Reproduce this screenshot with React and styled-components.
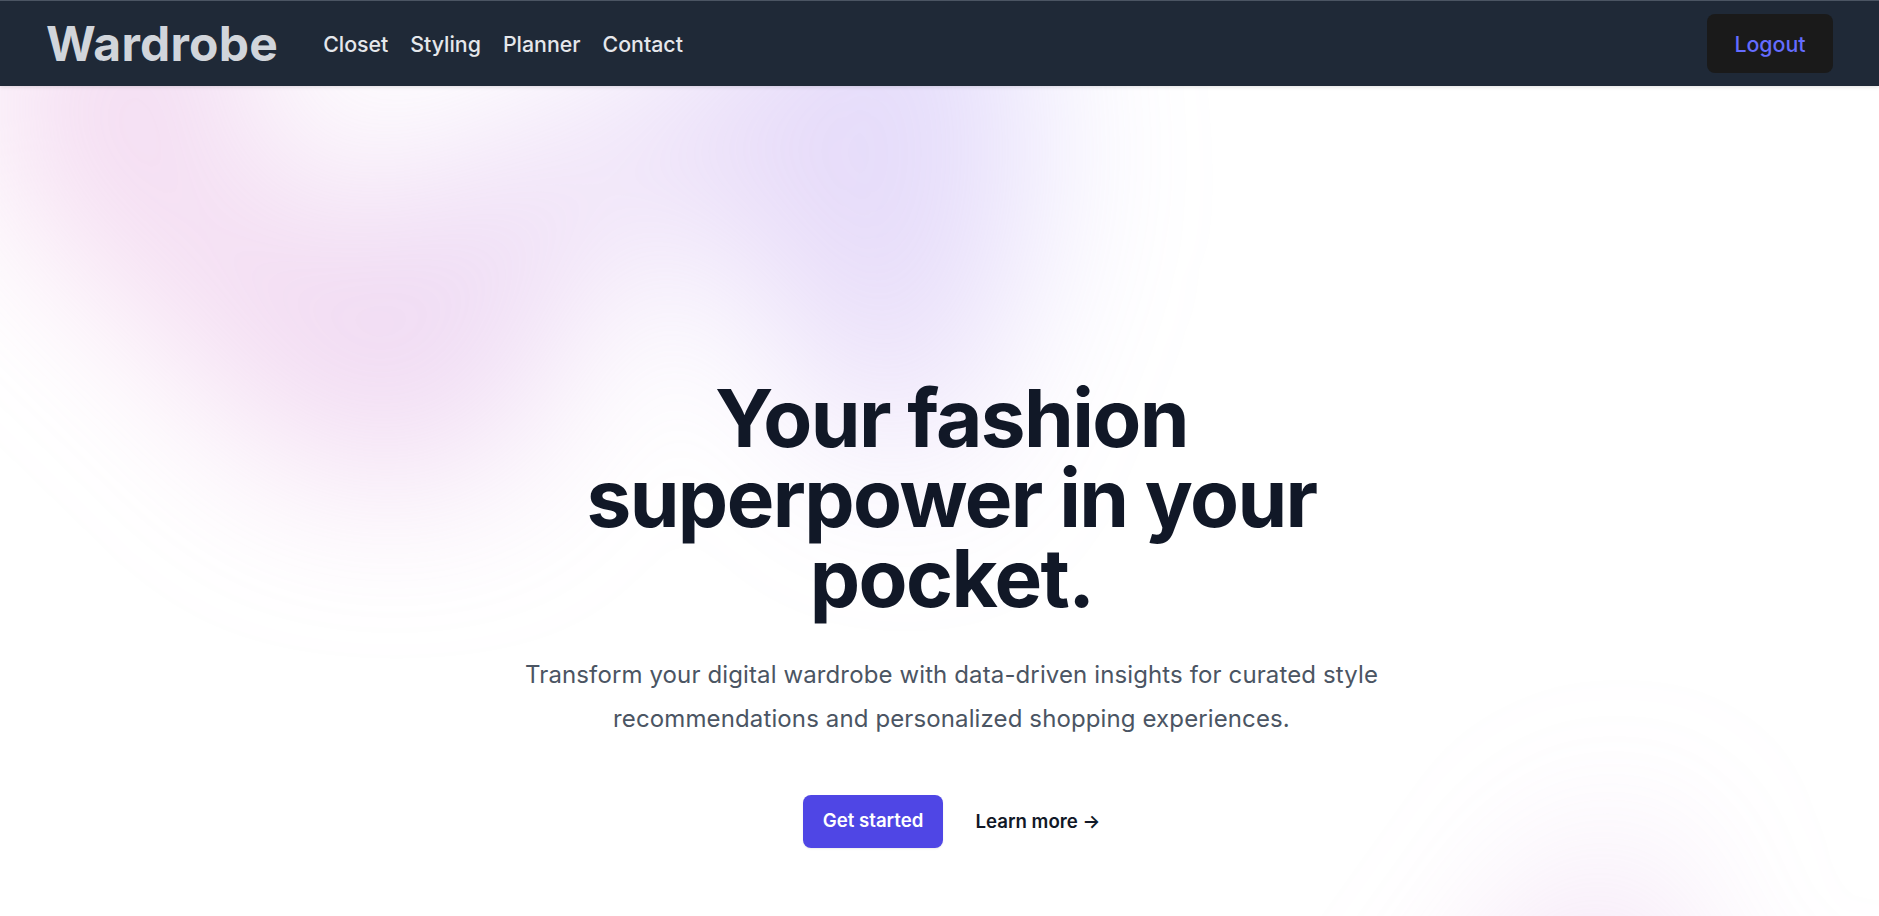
import React from "react";
import styled, { createGlobalStyle } from "styled-components";

const GlobalStyle = createGlobalStyle`
  html, body {
    margin: 0;
    padding: 0;
    background: #ffffff;
    font-family: Inter, "Noto Sans", sans-serif;
    -webkit-font-smoothing: antialiased;
  }
  * { box-sizing: border-box; }
`;

const BLOB_SHAPE =
  "polygon(74.1% 44.1%, 100% 61.6%, 97.5% 26.9%, 85.5% 0.1%, 80.7% 2%, 72.5% 32.5%, 60.2% 62.4%, 52.4% 68.1%, 47.5% 58.3%, 45.2% 34.5%, 27.5% 76.7%, 0.1% 64.9%, 17.9% 100%, 27.6% 76.8%, 76.1% 97.7%, 74.1% 44.1%)";

export const Page = styled.div`
  position: relative;
  isolation: isolate;
  overflow: hidden;
  height: 100vh;
  background: #ffffff;
`;

// blurred colour wash behind the hero
export const BlobLayer = styled.div`
  position: absolute;
  left: 0;
  right: 0;
  top: ${(p) => p.$top};
  z-index: -1;
  overflow: hidden;
  filter: blur(85px);
  pointer-events: none;
`;

export const Blob = styled.div`
  position: relative;
  left: ${(p) => p.$left};
  width: 1540px;
  aspect-ratio: 1155 / 678;
  transform: translateX(-50%) rotate(${(p) => p.$rotate || 0}deg);
  background: linear-gradient(to top right, #ff80b5, #9089fc);
  opacity: 0.3;
  clip-path: ${BLOB_SHAPE};
`;

export const NavBar = styled.header`
  display: flex;
  align-items: center;
  height: 86px;
  padding: 0 46px 0 46px;
  background: #1f2937;
  border-top: 1px solid #4b5563;
  box-shadow: 0 1px 4px rgba(0, 0, 0, 0.12);
`;

export const Logo = styled.div`
  font-size: 48px;
  font-weight: 700;
  letter-spacing: 0.005em;
  color: #d1d5db;
  margin-right: 45px;
  line-height: 1;
`;

export const Links = styled.nav`
  display: flex;
  gap: 22px;
  flex: 1;
`;

export const NavLink = styled.a`
  font-size: 21.33px;
  font-weight: 500;
  color: #e5e7eb;
  text-decoration: none;
  cursor: pointer;
`;

export const LogoutButton = styled.button`
  width: 126px;
  height: 59px;
  border-radius: 8px;
  border: 1px solid transparent;
  background: #1a1a1a;
  color: #646cff;
  font-family: inherit;
  font-size: 21.33px;
  font-weight: 500;
  cursor: pointer;
`;

export const Hero = styled.main`
  max-width: 920px;
  margin: 0 auto;
  padding: 292px 0 0 24px;
  text-align: center;
`;

export const Headline = styled.h1`
  margin: 0;
  font-size: 80px;
  line-height: 1;
  font-weight: 700;
  letter-spacing: -0.02em;
  color: #111827;
`;

export const Lead = styled.p`
  margin: 35px 0 0;
  font-size: 24px;
  line-height: 44px;
  letter-spacing: 0.005em;
  color: #4b5563;
`;

export const Actions = styled.div`
  display: flex;
  align-items: center;
  justify-content: center;
  gap: 32px;
  margin-top: 54px;
`;

export const PrimaryButton = styled.a`
  display: inline-block;
  padding: 13.3px 20px;
  border-radius: 8px;
  background: #4f46e5;
  color: #ffffff;
  font-size: 18.67px;
  line-height: 26.67px;
  font-weight: 600;
  box-shadow: 0 1px 2px rgba(0, 0, 0, 0.08);
  text-decoration: none;
  cursor: pointer;
`;

export const TextLink = styled.a`
  font-size: 18.67px;
  line-height: 32px;
  font-weight: 600;
  color: #111827;
  text-decoration: none;
  cursor: pointer;
`;

const navItems = ["Closet", "Styling", "Planner", "Contact"];

export default function App() {
  return (
    <Page>
      <GlobalStyle />
      <BlobLayer $top="-427px">
        <Blob $left="calc(50% - 640px)" $rotate={30} />
      </BlobLayer>
      <BlobLayer $top="496px">
        <Blob $left="calc(50% + 768px)" />
      </BlobLayer>

      <NavBar>
        <Logo>Wardrobe</Logo>
        <Links>
          {navItems.map((item) => (
            <NavLink key={item}>{item}</NavLink>
          ))}
        </Links>
        <LogoutButton>Logout</LogoutButton>
      </NavBar>

      <Hero>
        <Headline>Your fashion superpower in your pocket.</Headline>
        <Lead>
          Transform your digital wardrobe with data-driven insights for curated
          style recommendations and personalized shopping experiences.
        </Lead>
        <Actions>
          <PrimaryButton>Get started</PrimaryButton>
          <TextLink>Learn more →</TextLink>
        </Actions>
      </Hero>
    </Page>
  );
}
